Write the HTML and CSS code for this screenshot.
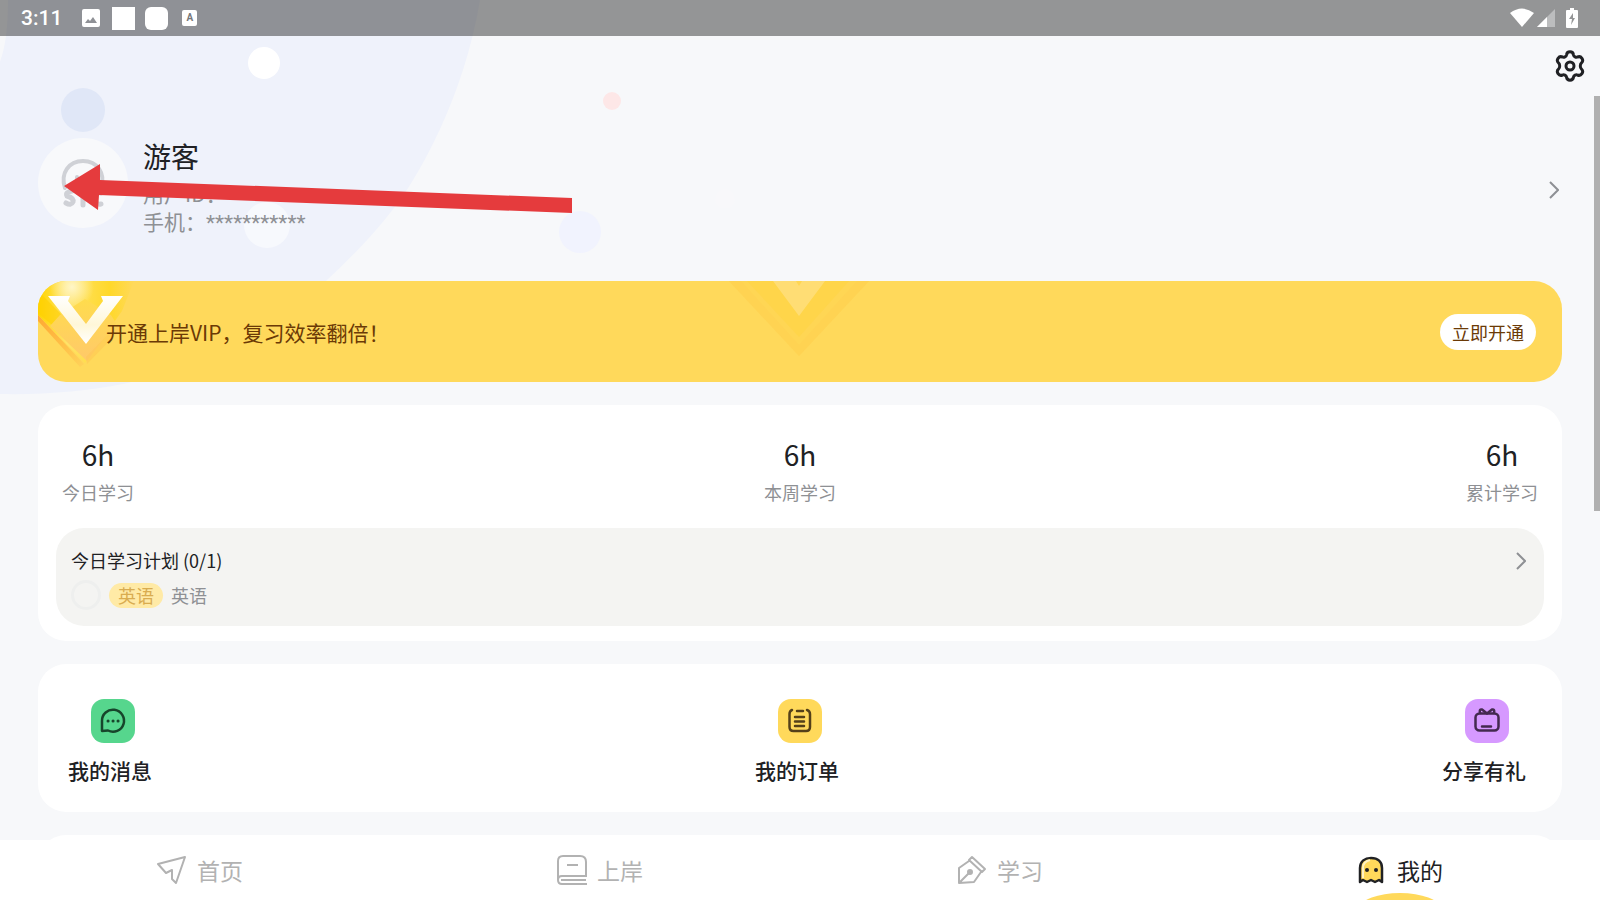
FILE: index.html
```html
<!DOCTYPE html>
<html lang="zh-CN">
<head>
  <meta charset="UTF-8">
  <meta name="viewport" content="width=device-width, initial-scale=1.0">
  <title>我的</title>
  <link rel="stylesheet" href="styles.css">
</head>
<body>
  <div class="app">
    <!-- 背景装饰 -->
    <svg class="backdrop" width="760" height="400" viewBox="0 0 760 400" aria-hidden="true">
      <path d="M8 0C8 30 5 48 0 62V394C44 395 88 391 123 384C206 366 272 332 327 280C358 251 388 220 410 185C432 150 450 110 463 70C470 48 476 24 480 0Z" fill="#eff2fb"/>
      <circle cx="264" cy="63" r="16" fill="#fff"/>
      <circle cx="83" cy="110" r="22" fill="#e0e7f7"/>
      <circle cx="267" cy="225" r="23" fill="#f7f9fd"/>
      <circle cx="612" cy="101" r="9" fill="#fde7e7"/>
      <circle cx="580" cy="232" r="21" fill="#f1f3fe"/>
      <circle cx="725" cy="199" r="10" fill="#f8f8fa"/>
    </svg>

    <!-- 状态栏 -->
    <div class="status-bar">
      <span class="clock">3:11</span>
      <svg width="18" height="18" viewBox="0 0 18 18" aria-hidden="true">
        <path fill="#fff" fill-rule="evenodd" d="M2 0H16Q18 0 18 2V16Q18 18 16 18H2Q0 18 0 16V2Q0 0 2 0ZM3 14H15L11 8L8 12L6 10Z"/>
      </svg>
      <span class="notice"></span>
      <span class="notice rounded"></span>
      <span class="notice letter">A</span>
      <div class="signals">
        <svg width="24" height="20" viewBox="0 0 24 20" aria-hidden="true"><path fill="#fff" d="M0 5Q12 -4 24 5L12 19Z"/></svg>
        <svg width="18" height="18" viewBox="0 0 18 18" aria-hidden="true"><path fill="#bcbdbe" d="M0 18L18 0V18Z"/><path fill="#fff" d="M0 18L10 8V18Z"/></svg>
        <svg class="battery" width="12" height="20" viewBox="0 0 12 20" aria-hidden="true"><path fill="#fff" fill-rule="evenodd" d="M4 0H8V2H11Q12 2 12 3V19Q12 20 11 20H1Q0 20 0 19V3Q0 2 1 2H4ZM7 5L3 11H6L5 17L9 10H7Z"/></svg>
      </div>
    </div>

    <header class="top-bar">
      <button class="icon-button" aria-label="设置">
        <svg width="30" height="32" viewBox="0 0 30 32" fill="none" stroke="#202124" stroke-width="3" stroke-linejoin="round">
          <path d="M11.500 5C12 0.800 18 0.800 18.500 5C18.800 6.600 21 7.800 22.500 7C26.200 5.400 29.300 10.300 26.500 12.800C24.900 14.200 24.900 17.800 26.500 19.200C29.300 21.700 26.200 26.600 22.500 25C21 24.200 18.800 25.400 18.500 27C18 31.200 12 31.200 11.500 27C11.200 25.400 9 24.200 7.500 25C3.800 26.600 0.700 21.700 3.500 19.200C5.100 17.800 5.100 14.200 3.500 12.800C0.700 10.300 3.800 5.400 7.500 7C9 7.800 11.200 6.600 11.500 5Z"/>
          <circle cx="15" cy="16" r="4"/>
        </svg>
      </button>
    </header>

    <main class="content">
      <!-- 用户信息 -->
      <section class="profile">
        <svg class="avatar" width="90" height="90" viewBox="0 0 90 90" aria-hidden="true">
          <circle cx="45" cy="45" r="45" fill="#f8f9fb"/>
          <g fill="none" stroke="#cfd1d6" stroke-width="4" stroke-linecap="round">
            <path d="M27 50C22 35 31 23 45 23C59 23 68 35 63 50"/>
            <path stroke-width="5" d="M34 53Q27 54 29 58Q36 60 35 64Q33 68 28 65M45 67V54H49Q54 55 52 60H46M63 55Q57 54 57 61Q57 67 63 66"/>
            <path d="M39 42V39M50 42V39"/>
          </g>
        </svg>
        <div class="profile-text">
          <h1>游客</h1>
          <p>用户ID：-</p>
          <p>手机：<span class="masked">***********</span></p>
        </div>
        <button class="icon-button" aria-label="个人资料">
          <svg width="10" height="18" viewBox="0 0 10 18" fill="none" stroke="#8e9094" stroke-width="2"><path d="M1 1L9 9L1 17"/></svg>
        </button>
        <!-- 指向头像的箭头 -->
        <svg class="pointer" width="509" height="48" viewBox="0 0 509 48" aria-hidden="true">
          <path fill="#e53b3d" d="M0 23L36 1V17L508 35V50L35 32L34 47Z"/>
        </svg>
      </section>

      <!-- 会员横幅 -->
      <section class="vip">
        <svg class="vip-badge" width="96" height="90" viewBox="0 0 96 90" aria-hidden="true">
          <defs>
            <linearGradient id="gold" x1="0" y1="0" x2="1" y2="0">
              <stop offset="0" stop-color="#ffd500"/>
              <stop offset=".3" stop-color="#ffe36a"/>
              <stop offset=".75" stop-color="#ffd82a"/>
              <stop offset="1" stop-color="#ffd95b"/>
            </linearGradient>
            <linearGradient id="edge" x1="0" y1="0" x2="1" y2="1">
              <stop offset="0" stop-color="#ff9420"/>
              <stop offset="1" stop-color="#ffd05a"/>
            </linearGradient>
            <linearGradient id="face" x1="0" y1="0" x2="0" y2="1">
              <stop offset="0" stop-color="#ffdc4d"/>
              <stop offset="1" stop-color="#ffc96a"/>
            </linearGradient>
            <linearGradient id="letter" x1="0" y1="0" x2="0" y2="1">
              <stop offset="0" stop-color="#fff"/>
              <stop offset=".6" stop-color="#fff7d8"/>
              <stop offset="1" stop-color="#fff"/>
            </linearGradient>
            <radialGradient id="shine">
              <stop offset="0" stop-color="#fff6c8"/>
              <stop offset="1" stop-color="#fff6c8" stop-opacity="0"/>
            </radialGradient>
          </defs>
          <path fill="url(#gold)" d="M0 0H96L84 30L47 82L0 34Z"/>
          <circle cx="34" cy="6" r="22" fill="url(#shine)"/>
          <path fill="#ffcf00" opacity=".6" d="M0 10L25 35L14 44L0 32Z"/>
          <path fill="url(#face)" d="M22 34L47 18L73 34L78 42L49 80L12 45Z"/>
          <path fill="url(#edge)" d="M0 34L46 83L42 86L0 40Z" opacity=".7"/>
          <path fill="#ffc552" opacity=".5" d="M49 83L84 47L80 43L48 76Z"/>
          <path fill="url(#letter)" d="M10 15H32L30 20L48 43L65 20L63 15H85L48 63Z"/>
        </svg>
        <svg class="vip-watermark" width="150" height="80" viewBox="0 0 150 80" aria-hidden="true">
          <path fill="#ffd654" d="M4 0H144L74 75Z"/>
          <path fill="#ffd052" opacity=".6" d="M4 0H16L74 64L132 0H144L74 75Z"/>
          <path fill="#ffd345" opacity=".6" d="M22 0H50L74 34L100 0H124L74 56Z"/>
          <path fill="#ffdd74" d="M48 0H71L74 5L77 0H100L74 35Z"/>
        </svg>
        <p>开通上岸VIP，复习效率翻倍！</p>
        <button class="vip-button">立即开通</button>
      </section>

      <!-- 学习统计 -->
      <section class="card study">
        <dl class="stats">
          <div><dd>6h</dd><dt>今日学习</dt></div>
          <div><dd>6h</dd><dt>本周学习</dt></div>
          <div><dd>6h</dd><dt>累计学习</dt></div>
        </dl>
        <div class="plan">
          <div class="plan-head">
            <h2>今日学习计划 (0/1)</h2>
            <button class="icon-button" aria-label="学习计划">
              <svg width="10" height="18" viewBox="0 0 10 18" fill="none" stroke="#8e9094" stroke-width="2"><path d="M1 1L9 9L1 17"/></svg>
            </button>
          </div>
          <label class="plan-item">
            <input type="checkbox">
            <span class="tag">英语</span>
            <span>英语</span>
          </label>
        </div>
      </section>

      <!-- 快捷入口 -->
      <section class="card shortcuts">
        <a href="#" class="shortcut">
          <svg width="44" height="44" viewBox="0 0 44 44" fill="none" stroke="#17452b" stroke-width="2.500" stroke-linecap="round" stroke-linejoin="round" aria-hidden="true">
            <rect width="44" height="44" rx="13" fill="#56d68d" stroke="none"/>
            <path d="M11 32V22A11 11 0 1 1 17 31.500Z"/>
            <path stroke-width="3" d="M17 22h.1M22 22h.1M27 22h.1"/>
          </svg>
          <span>我的消息</span>
        </a>
        <a href="#" class="shortcut">
          <svg width="44" height="44" viewBox="0 0 44 44" fill="none" stroke="#54401a" stroke-width="2.500" stroke-linecap="round" stroke-linejoin="round" aria-hidden="true">
            <rect width="44" height="44" rx="13" fill="#ffd95b" stroke="none"/>
            <path d="M14 11Q11.500 12 11.500 15V28Q11.500 32 15.500 32H28Q32 32 32 28V15Q32 12 29 11M19 12H25M17 18H26M17 22.500H26M17 27H26"/>
          </svg>
          <span>我的订单</span>
        </a>
        <a href="#" class="shortcut">
          <svg width="44" height="44" viewBox="0 0 44 44" fill="none" stroke="#43294f" stroke-width="2.500" stroke-linecap="round" stroke-linejoin="round" aria-hidden="true">
            <rect width="44" height="44" rx="13" fill="#d699ff" stroke="none"/>
            <rect x="10.500" y="14.500" width="23" height="17" rx="4"/>
            <path d="M17 27.500H26M15 14Q14 10 17 10.500L22 14.500L27 10.500Q30 10 29 14"/>
          </svg>
          <span>分享有礼</span>
        </a>
      </section>

      <section class="card next"></section>
    </main>

    <!-- 底部导航 -->
    <nav class="tab-bar">
      <a href="#">
        <svg width="30" height="30" viewBox="0 0 30 30" fill="none" stroke="#b2b2b2" stroke-width="2" stroke-linejoin="round" aria-hidden="true">
          <path d="M1 9L28 2L19 28L15 24V15L9 18Z"/>
        </svg>
        <span>首页</span>
      </a>
      <a href="#">
        <svg width="30" height="30" viewBox="0 0 30 30" fill="none" stroke="#b2b2b2" stroke-width="2" aria-hidden="true">
          <path d="M1 25V6Q1 1 6 1H23Q29 1 29 7V21H5Q1 21 1 25Q1 29 5 29H30M4 25H29M10 10H21"/>
        </svg>
        <span>上岸</span>
      </a>
      <a href="#">
        <svg width="30" height="30" viewBox="0 0 30 30" fill="none" stroke="#b2b2b2" stroke-width="2" stroke-linejoin="round" aria-hidden="true">
          <path d="M15 2L28 14L25 17L12 5ZM12 6L2 13V28L17 27L24 17M2 28L12 18"/>
          <circle cx="13" cy="17" r="2" fill="#b2b2b2"/>
        </svg>
        <span>学习</span>
      </a>
      <a href="#" class="active">
        <svg width="30" height="30" viewBox="0 0 30 30" aria-hidden="true">
          <path d="M3 27V13C3 6 8 3 14 3C21 3 25 7 25 13V27L22 25L18 27L14 25L10 27L6 25Z" fill="#ffd95b" stroke="#202124" stroke-width="2.500" stroke-linejoin="round"/>
          <path d="M6 23V13C6 8 9 6 13 5" fill="none" stroke="#fff3c4" stroke-width="2"/>
          <circle cx="10" cy="15" r="2" fill="#202124"/>
          <circle cx="19" cy="15" r="2" fill="#202124"/>
        </svg>
        <span>我的</span>
      </a>
    </nav>

    <div class="scroll-thumb"></div>
  </div>
</body>
</html>
```
FILE: styles.css
```css
* {
  box-sizing: border-box;
}

body {
  margin: 0;
  background-color: #f7f8fa;
  color: #202124;
  font-family: "Noto Sans CJK SC", sans-serif;
  font-size: 18px;
}

h1, h2, p, dl, dd {
  margin: 0;
  font-weight: inherit;
}

svg {
  display: block;
  flex-shrink: 0;
}

a {
  color: inherit;
  text-decoration: none;
}

button {
  padding: 0;
  border: 0;
  background: none;
  color: inherit;
  font: inherit;
  cursor: pointer;
}

.app {
  position: relative;
  display: flex;
  flex-direction: column;
  height: 100vh;
  overflow: hidden;
}

.backdrop {
  position: absolute;
  top: 0;
  left: 0;
}

.status-bar {
  position: relative;
  display: flex;
  align-items: center;
  gap: 12px;
  height: 36px;
  flex-shrink: 0;
  padding: 0 22px 0 21px;
  background-color: rgba(0, 0, 0, 0.4);
  color: #fff;
}

.clock {
  margin-right: 8px;
  font-family: Roboto, sans-serif;
  font-size: 21px;
  font-weight: 500;
}

.notice {
  width: 23px;
  height: 23px;
  background-color: #fff;
}

.rounded {
  border-radius: 6px;
}

.notice + .notice {
  margin-left: -2px;
}

.notice.letter {
  width: 15px;
  height: 16px;
  margin-left: 2px;
  border-radius: 2px;
  color: #77787a;
  font: 700 10px/15px Roboto, sans-serif;
  text-align: center;
}

.signals {
  display: flex;
  align-items: center;
  gap: 3px;
  margin-left: auto;
}

.battery {
  margin-left: 8px;
}

.top-bar {
  position: relative;
  display: flex;
  justify-content: flex-end;
  align-items: center;
  height: 60px;
  flex-shrink: 0;
  padding: 0 15px;
}

.content {
  position: relative;
  display: flex;
  flex-direction: column;
  gap: 23px;
  flex: 1;
  min-height: 0;
  padding: 42px 38px 0;
  overflow: hidden;
}

.content > * {
  flex-shrink: 0;
}

/* 用户信息 */
.profile {
  position: relative;
  display: flex;
  align-items: flex-start;
  gap: 15px;
  height: 120px;
}

.profile-text {
  flex: 1;
  color: #8e9094;
  font-size: 21px;
  line-height: 28px;
}

.profile-text h1 {
  margin-bottom: 5px;
  color: #202124;
  font-size: 28px;
  line-height: 36px;
}

.masked {
  font-family: Roboto, sans-serif;
}

.profile .icon-button {
  padding: 43px 3px;
}

.pointer {
  position: absolute;
  top: 25px;
  left: 26px;
  overflow: visible;
}

/* 会员横幅 */
.vip {
  position: relative;
  display: flex;
  justify-content: space-between;
  align-items: center;
  height: 101px;
  padding: 0 26px 0 68px;
  border-radius: 28px;
  background-color: #ffd95b;
  color: #6b3a06;
  font-size: 21px;
  overflow: hidden;
}

.vip p {
  position: relative;
}

.vip-badge {
  position: absolute;
  top: 0;
  left: 0;
}

.vip-watermark {
  position: absolute;
  top: 0;
  left: 50%;
  transform: translateX(-50%);
}

.vip-button {
  height: 36px;
  padding: 0 12px;
  border-radius: 18px;
  background-color: #fff;
  font-size: 18px;
}

/* 卡片 */
.card {
  border-radius: 28px;
  background-color: #fff;
}

.study {
  padding: 28px 18px 15px;
}

.stats {
  display: flex;
  justify-content: space-between;
  padding: 0 6px;
  text-align: center;
}

.stats dd {
  font-size: 28px;
  line-height: 42px;
}

.stats dt {
  color: #8e9094;
  line-height: 34px;
}

.plan {
  margin-top: 19px;
  padding: 16px 18px 13px 15px;
  border-radius: 28px;
  background-color: #f4f4f2;
}

.plan-head {
  display: flex;
  justify-content: space-between;
  align-items: center;
}

.plan h2 {
  font-size: 18px;
  line-height: 33px;
}

.plan-item {
  display: flex;
  align-items: center;
  gap: 8px;
  height: 36px;
  color: #8e9094;
}

.plan-item input {
  appearance: none;
  width: 30px;
  height: 30px;
  margin: 0;
  border: 3px solid #eeefee;
  border-radius: 50%;
}

.tag {
  padding: 0 9px;
  border-radius: 13px;
  background-color: #ffeaa6;
  color: #d9ac50;
  line-height: 25px;
}

/* 快捷入口 */
.shortcuts {
  display: flex;
  justify-content: space-between;
  padding: 35px 36px 26px 30px;
}

.shortcut {
  display: flex;
  flex-direction: column;
  align-items: center;
  gap: 12px;
  font-size: 21px;
  font-weight: 500;
  line-height: 31px;
}

.shortcut svg {
  margin-left: 5px;
}

.next {
  height: 120px;
}

/* 底部导航 */
.tab-bar {
  position: relative;
  display: flex;
  height: 60px;
  flex-shrink: 0;
  background-color: #fff;
  color: #b2b2b2;
  font-size: 23px;
  overflow: hidden;
}

.tab-bar a {
  position: relative;
  display: flex;
  flex: 1;
  justify-content: center;
  align-items: center;
  gap: 10px;
}

.tab-bar .active {
  color: #202124;
}

.tab-bar .active::after {
  content: "";
  position: absolute;
  top: 53px;
  left: 50%;
  width: 80px;
  height: 30px;
  border-radius: 50%;
  background-color: #ffd95b;
  transform: translateX(-50%);
}

.scroll-thumb {
  position: absolute;
  top: 96px;
  right: 0;
  width: 6px;
  height: 415px;
  background-color: #b0b0b0;
}
```
